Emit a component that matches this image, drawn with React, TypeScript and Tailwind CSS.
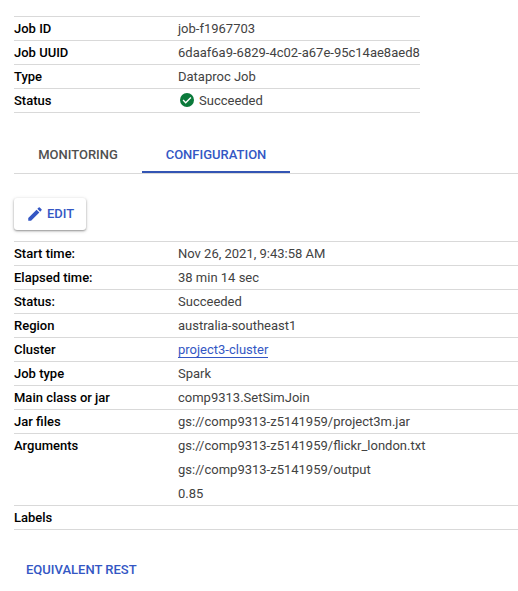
import React from "react";

type RowProps = { label: string; children?: React.ReactNode };

function Row({ label, children }: RowProps) {
  return (
    <div className="flex border-b border-[#d9d9d9] text-[13px] leading-[23px]">
      <div className="w-[164px] shrink-0 font-medium text-black">{label}</div>
      <div className="whitespace-nowrap text-[#424242]">{children}</div>
    </div>
  );
}

export default function App() {
  return (
    <main className="h-[591px] w-[518px] overflow-hidden bg-white pl-[14px] pt-4 font-[Roboto,sans-serif]">
      <section className="w-[406px] border-t border-[#d9d9d9]">
        <Row label="Job ID">job-f1967703</Row>
        <Row label="Job UUID">6daaf6a9-6829-4c02-a67e-95c14ae8aed8</Row>
        <Row label="Type">Dataproc Job</Row>
        <Row label="Status">
          <span className="flex items-center gap-[5px] pl-0.5">
            <svg className="mb-px" width="14" height="14" viewBox="0 0 14 14">
              <circle cx="7" cy="7" r="7" fill="#0b7a3b" />
              <path d="M3.1 7.1 5.7 9.7l5.2-5.2" fill="none" stroke="#fff" strokeWidth="1.4" />
            </svg>
            Succeeded
          </span>
        </Row>
      </section>

      <nav className="mt-6 flex h-[37px] border-b border-[#d9d9d9] text-[13px] font-medium leading-[35px]">
        <div className="w-32 text-center text-[#505050]">MONITORING</div>
        <div className="h-9 w-[148px] border-b-2 border-[#3355b4] text-center text-[#3457c4]">CONFIGURATION</div>
      </nav>

      <button className="mt-6 flex h-8 w-[72px] items-center gap-[3px] rounded-[3px] pl-3 text-[13px] font-medium text-[#3457c4] shadow-[0_1px_2px_rgba(0,0,0,0.35),0_1px_4px_rgba(0,0,0,0.15)]">
        <svg width="18" height="18" viewBox="0 0 24 24" fill="currentColor">
          <path d="M3 17.25V21h3.75L17.81 9.94l-3.75-3.75zM20.71 7.04a1 1 0 0 0 0-1.41l-2.34-2.34a1 1 0 0 0-1.41 0l-1.83 1.83 3.75 3.75z" />
        </svg>
        EDIT
      </button>

      <section className="mt-[11px] border-t border-[#d9d9d9]">
        <Row label="Start time:">Nov 26, 2021, 9:43:58 AM</Row>
        <Row label="Elapsed time:">38 min 14 sec</Row>
        <Row label="Status:">Succeeded</Row>
        <Row label="Region">australia-southeast1</Row>
        <Row label="Cluster">
          <a className="border-b border-[#3457c4] text-[#3457c4]">project3-cluster</a>
        </Row>
        <Row label="Job type">Spark</Row>
        <Row label="Main class or jar">comp9313.SetSimJoin</Row>
        <Row label="Jar files">gs://comp9313-z5141959/project3m.jar</Row>
        <Row label="Arguments">
          <div>gs://comp9313-z5141959/flickr_london.txt</div>
          <div className="mt-px">gs://comp9313-z5141959/output</div>
          <div className="mt-px">0.85</div>
        </Row>
        <Row label="Labels" />
      </section>

      <button className="ml-3 mt-7 block text-[13px] font-medium leading-6 text-[#3457c4]">EQUIVALENT REST</button>
    </main>
  );
}
